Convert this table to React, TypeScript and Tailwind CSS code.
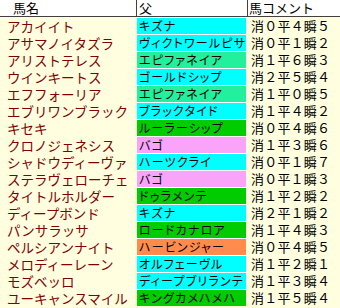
import React from "react";

type Row = { name: string; sire: string; color: string; comment: string };

const CYAN = "bg-[#00ffff]";
const MINT = "bg-[#22f09c]";
const GREEN = "bg-[#00cc00]";
const PINK = "bg-[#f9a3f9]";
const ORANGE = "bg-[#ff8c4c]";

const rows: Row[] = [
  { name: "アカイイト", sire: "キズナ", color: CYAN, comment: "消０平４瞬５" },
  { name: "アサマノイタズラ", sire: "ヴィクトワールピサ", color: CYAN, comment: "消０平１瞬２" },
  { name: "アリストテレス", sire: "エピファネイア", color: MINT, comment: "消１平６瞬３" },
  { name: "ウインキートス", sire: "ゴールドシップ", color: CYAN, comment: "消２平５瞬４" },
  { name: "エフフォーリア", sire: "エピファネイア", color: MINT, comment: "消１平０瞬５" },
  { name: "エブリワンブラック", sire: "ブラックタイド", color: CYAN, comment: "消１平４瞬２" },
  { name: "キセキ", sire: "ルーラーシップ", color: GREEN, comment: "消０平４瞬６" },
  { name: "クロノジェネシス", sire: "バゴ", color: PINK, comment: "消１平３瞬６" },
  { name: "シャドウディーヴァ", sire: "ハーツクライ", color: CYAN, comment: "消０平１瞬７" },
  { name: "ステラヴェローチェ", sire: "バゴ", color: PINK, comment: "消０平１瞬３" },
  { name: "タイトルホルダー", sire: "ドゥラメンテ", color: GREEN, comment: "消１平２瞬２" },
  { name: "ディープボンド", sire: "キズナ", color: CYAN, comment: "消２平１瞬２" },
  { name: "パンサラッサ", sire: "ロードカナロア", color: GREEN, comment: "消１平４瞬３" },
  { name: "ペルシアンナイト", sire: "ハービンジャー", color: ORANGE, comment: "消０平４瞬５" },
  { name: "メロディーレーン", sire: "オルフェーヴル", color: CYAN, comment: "消１平２瞬１" },
  { name: "モズベッロ", sire: "ディープブリランテ", color: CYAN, comment: "消１平３瞬４" },
  { name: "ユーキャンスマイル", sire: "キングカメハメハ", color: GREEN, comment: "消１平５瞬４" },
];

export default function App() {
  return (
    <div className="w-[340px] h-[308px] overflow-hidden bg-[#ffffe0] font-['Noto_Sans_CJK_JP',sans-serif] leading-[14px]">
      {/* header */}
      <div className="flex h-[17px] bg-white border-b border-[#404040] text-[13px] text-black">
        <div className="w-[136px] pl-[13px] flex items-center">馬名</div>
        <div className="w-[111px] border-l border-[#404040] pl-[2px] flex items-center">父</div>
        <div className="flex-1 border-l border-[#404040] pl-[1px] flex items-center">馬コメント</div>
      </div>

      {rows.map((r) => (
        <div key={r.name} className="flex h-[17px]">
          <div className="w-[137px] pl-[7px] pt-[1px] flex items-center text-[13.5px] text-[#800000] whitespace-nowrap">
            {r.name}
          </div>
          <div className="w-[109px] pt-[1px] bg-white">
            <div
              className={`${r.color} h-[16px] pl-[2px] flex items-center text-[12px] tracking-[1.2px] text-black whitespace-nowrap overflow-hidden [font-feature-settings:"palt"]`}
            >
              {r.sire}
            </div>
          </div>
          <div className="flex-1 pl-[5px] pt-[1px] flex items-center text-[13px] text-black tracking-[0.2px] whitespace-nowrap">
            {r.comment}
          </div>
        </div>
      ))}
    </div>
  );
}
